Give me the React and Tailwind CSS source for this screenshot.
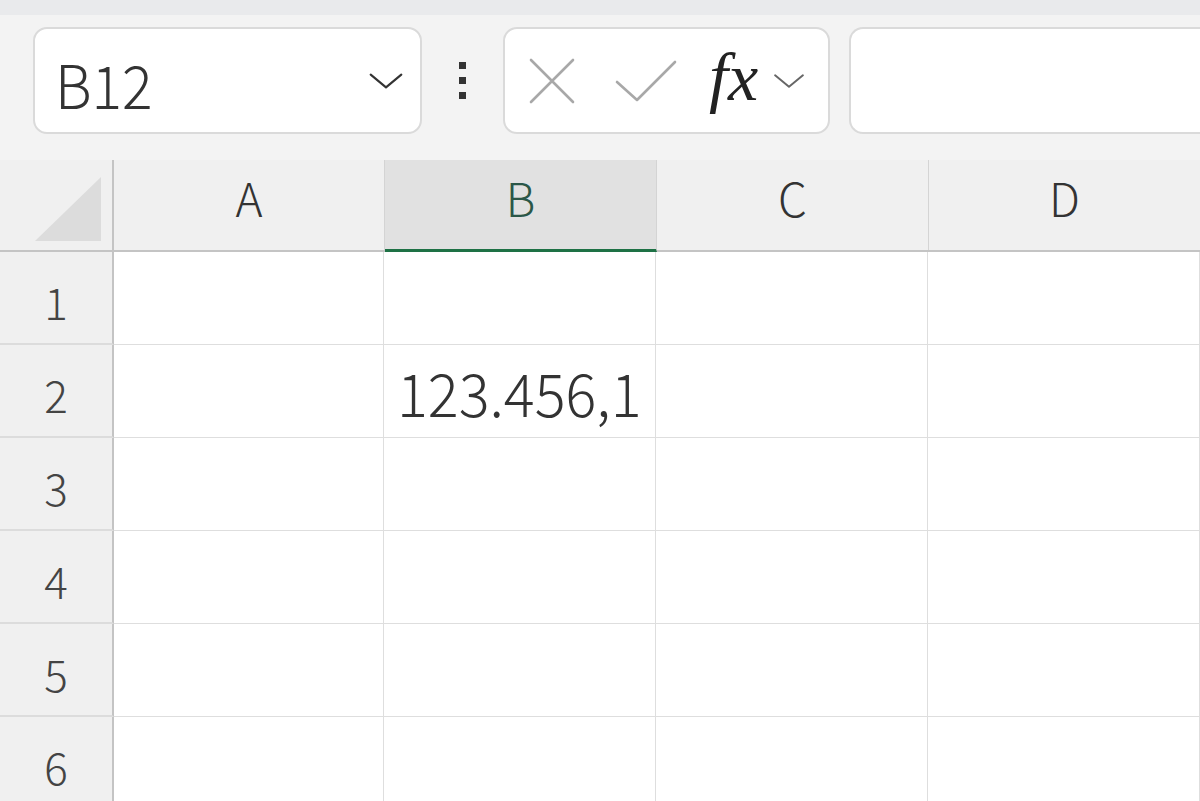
const COLS = ["A", "B", "C", "D"];
const ROWS = [1, 2, 3, 4, 5, 6];
const font = { fontFamily: '"Noto Sans CJK JP", "Noto Sans", sans-serif' };

function Chevron({ className }) {
  return (
    <svg viewBox="0 0 40 22" className={className} fill="none" stroke="currentColor" strokeWidth="2.4" strokeLinecap="round" strokeLinejoin="round">
      <path d="M3 4 L20 18 L37 4" />
    </svg>
  );
}

function Toolbar() {
  return (
    <div className="flex items-start bg-[#f3f3f3] pt-3 h-[145px] pl-[33px]">
      <div className="flex items-center w-[389px] h-[107px] rounded-[14px] border-2 border-[#dadada] bg-white pl-[20px] pr-[16px]">
        <span className="text-[60px] leading-none font-light text-[#333] inline-block scale-x-[0.95] origin-left mt-[4px]">B12</span>
        <Chevron className="ml-auto w-[36px] h-[20px] text-[#333]" />
      </div>
      <div className="flex flex-col items-center justify-center gap-[8px] w-[81px] h-[107px]">
        <span className="w-[7px] h-[7px] bg-[#333]" />
        <span className="w-[7px] h-[7px] bg-[#333]" />
        <span className="w-[7px] h-[7px] bg-[#333]" />
      </div>
      <div className="flex items-center w-[327px] h-[107px] rounded-[14px] border-2 border-[#dadada] bg-white pl-[24px]">
        <svg viewBox="0 0 46 46" className="w-[46px] h-[46px]" fill="none" stroke="#a8a8a8" strokeWidth="2.6" strokeLinecap="round">
          <path d="M2 2 L44 44 M44 2 L2 44" />
        </svg>
        <svg viewBox="0 0 62 42" className="ml-[40px] w-[62px] h-[42px]" fill="none" stroke="#a8a8a8" strokeWidth="2.6" strokeLinecap="round" strokeLinejoin="round">
          <path d="M2 22 L22 40 L60 2" />
        </svg>
        <span className="ml-[32px] text-[68px] leading-none italic text-[#222] mt-[-8px]" style={{ fontFamily: '"Liberation Serif", serif' }}>fx</span>
        <Chevron className="ml-[14px] w-[34px] h-[18px] text-[#666]" />
      </div>
      <div className="ml-[19px] flex-1 h-[107px] rounded-l-[14px] border-2 border-r-0 border-[#dadada] bg-white" />
    </div>
  );
}

function Header() {
  return (
    <div className="flex h-[92px] bg-[#f0f0f0] border-b-2 border-[#c4c4c4]">
      <div className="relative w-[114px] shrink-0 border-r-2 border-[#c4c4c4]">
        <svg viewBox="0 0 68 64" className="absolute left-[35px] top-[17px] w-[68px] h-[64px]">
          <path d="M66 0 L66 64 L0 64 Z" fill="#dcdcdc" />
        </svg>
      </div>
      {COLS.map((c, i) => (
        <div
          key={c}
          className={
            (i === 0 ? "w-[271px] " : "w-[272px] ") +
            (c === "B"
              ? "shrink-0 flex justify-center pt-[14px] bg-[#e1e1e1] border-r border-[#d4d4d4] border-b-[3px] border-b-[#1e7145] mb-[-2px] text-[#2b5748]"
              : "shrink-0 flex justify-center pt-[14px] border-r border-[#d4d4d4] text-[#333]")
          }
        >
          <span className="text-[46px] leading-none font-light">{c}</span>
        </div>
      ))}
    </div>
  );
}

function Row({ n }) {
  return (
    <div className="flex h-[93px]">
      <div className="w-[114px] shrink-0 flex items-center justify-center bg-[#f0f0f0] border-r-2 border-[#c4c4c4] border-b-2 border-b-[#dcdcdc] text-[#444]">
        <span className="text-[44px] leading-none font-light mt-[6px]">{n}</span>
      </div>
      {COLS.map((c, i) => (
        <div key={c} className={(i === 0 ? "w-[270px] " : "w-[272px] ") + "shrink-0 flex items-center bg-white border-r border-b border-[#dedede] pl-[13px]"}>
          {n === 2 && c === "B" && (
            <span className="text-[60px] leading-none font-light text-[#333] inline-block scale-x-[0.96] origin-left">123.456,1</span>
          )}
        </div>
      ))}
    </div>
  );
}

export default function App() {
  return (
    <div className="w-[1200px] h-[801px] overflow-hidden bg-white" style={font}>
      <div className="h-[15px] bg-[#e9eaec]" />
      <Toolbar />
      <Header />
      {ROWS.map((n) => (
        <Row key={n} n={n} />
      ))}
    </div>
  );
}
